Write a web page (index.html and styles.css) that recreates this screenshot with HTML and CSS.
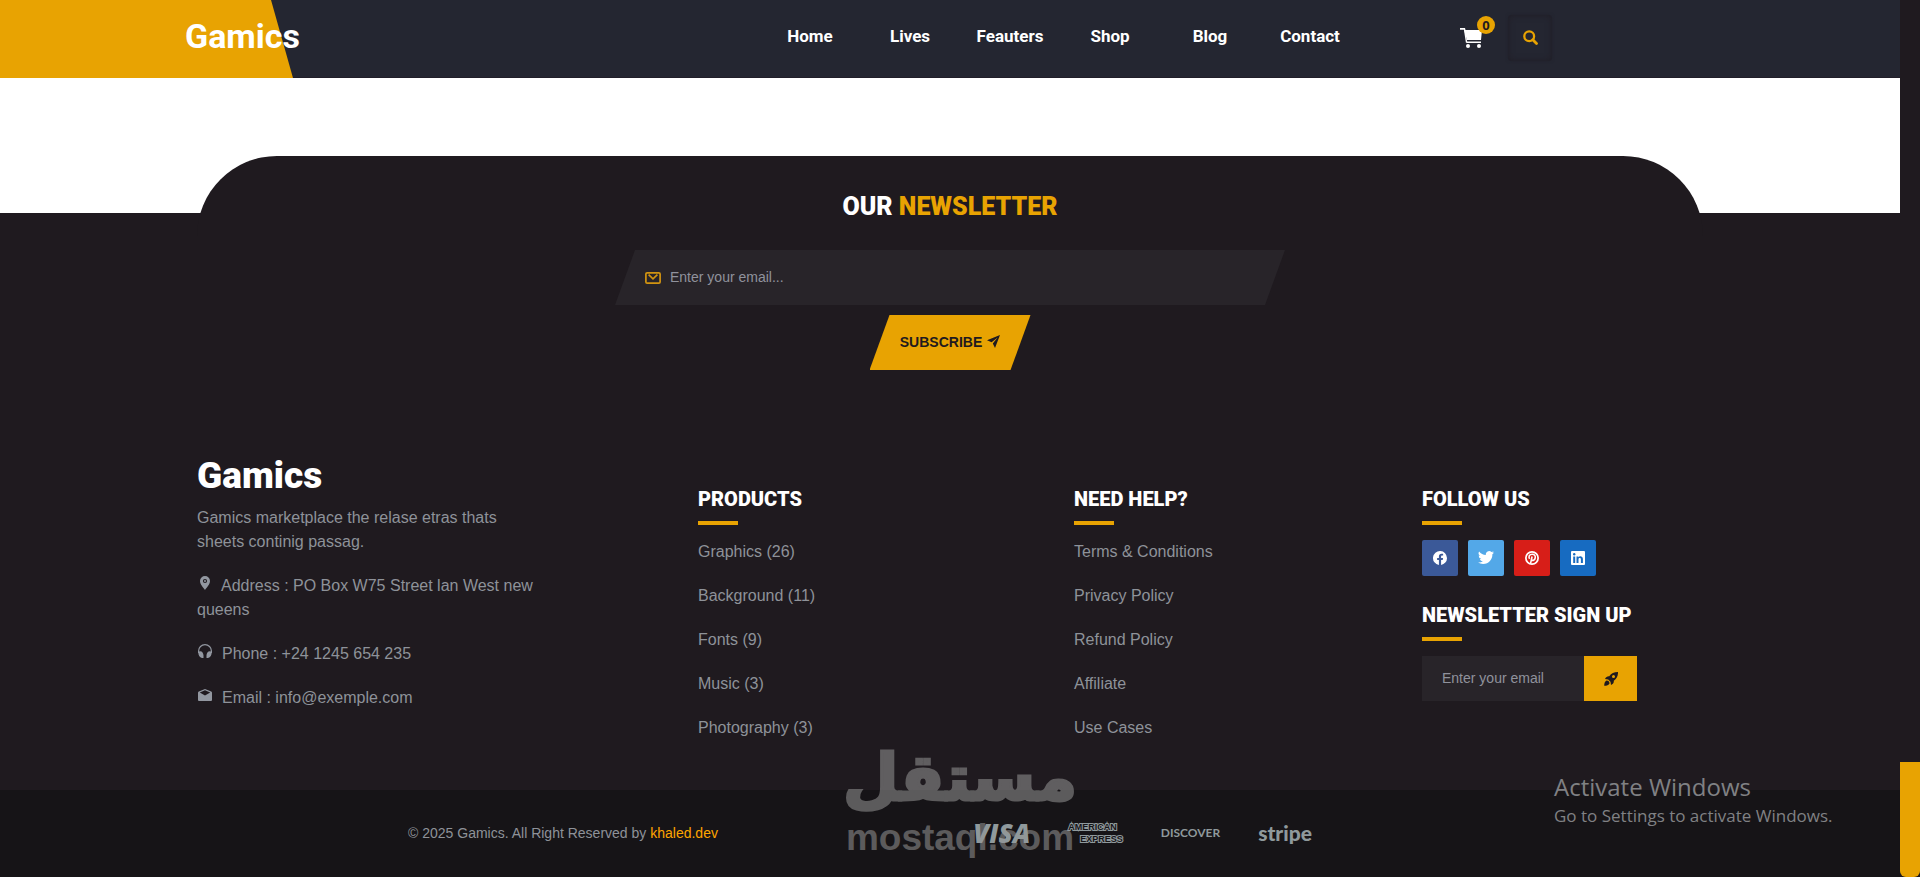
FILE: index.html
```html
<!DOCTYPE html>
<html lang="en">
<head>
<meta charset="utf-8">
<title>Gamics</title>
<link rel="stylesheet" href="styles.css">
</head>
<body>
<div class="page">
  <header class="header">
    <a class="logo" href="#">Gamics</a>
    <div class="header-right">
      <nav class="nav">
        <a href="#">Home</a>
        <a href="#">Lives</a>
        <a href="#">Feauters</a>
        <a href="#">Shop</a>
        <a href="#">Blog</a>
        <a href="#">Contact</a>
      </nav>
      <div class="tools">
        <a class="cart" href="#" aria-label="Cart">
          <svg width="22" height="20" viewBox="0 0 22 20" fill="#fff"><path d="M0 0h5l.5 2H22l-1 10H7L4 1.700H0zM6.500 13.500H21V15H6.500z"/><path d="M4.600 2l2 12.600" stroke="#fff" stroke-width="1.400"/><circle cx="8" cy="18" r="2"/><circle cx="19" cy="18" r="2"/></svg>
          <span class="badge">0</span>
        </a>
        <button class="search" type="button" aria-label="Search">
          <svg width="15" height="15" viewBox="0 0 15 15" fill="none" stroke="#e8a302"><circle cx="6.200" cy="6.200" r="4.900" stroke-width="2.300"/><path d="M9.800 9.800l3.700 3.700" stroke-width="2.800" stroke-linecap="round"/></svg>
        </button>
      </div>
    </div>
  </header>
  <main class="blank"></main>
  <footer class="footer">
    <section class="newsletter container">
      <h2 class="newsletter-title">OUR <span>NEWSLETTER</span></h2>
      <form class="subscribe-form">
        <label class="email-field">
          <svg width="16" height="12" viewBox="0 0 16 12" fill="none" stroke="#d29410" stroke-width="1.700"><rect x=".9" y=".9" width="14.200" height="10.200" rx="1.200"/><path d="M3.600 2.600L8 6.800l4.400-4.200"/></svg>
          <input type="email" placeholder="Enter your email..." aria-label="Enter your email">
        </label>
        <button class="subscribe" type="button">SUBSCRIBE
          <svg width="13" height="13" viewBox="0 0 13 13" fill="#1f1a1f"><path d="M13 0L0 5.200l4.600 2.100L10.600 2.600 5.800 8.400 8 13z"/></svg>
        </button>
      </form>
    </section>
    <div class="columns container">
      <section class="about">
        <h2 class="footer-logo">Gamics</h2>
        <p>Gamics marketplace the relase etras thats sheets continig passag.</p>
        <p><svg class="ico pin" width="10" height="14" viewBox="0 0 10 14" fill="#9297a0"><path fill-rule="evenodd" d="M5 0a5 5 0 0 1 5 5c0 3.400-3.300 6.500-5 9C3.300 11.500 0 8.400 0 5a5 5 0 0 1 5-5zm0 2.900a2.100 2.100 0 1 0 0 4.200 2.100 2.100 0 0 0 0-4.200z"/><circle cx="5" cy="5" r="1"/></svg>Address : PO Box W75 Street lan West new queens</p>
        <p><svg class="ico" width="14" height="14" viewBox="0 0 14 14" fill="#9297a0"><path d="M.6 9V7a6.400 6.400 0 0 1 12.800 0v2" fill="none" stroke="#9297a0" stroke-width="1.200"/><path d="M1.200 7.500C3.500 6.500 5.500 9 5.500 11.500V14H4C1.500 13.500.3 11 .3 8.500zM12.800 7.500C10.500 6.500 8.500 9 8.500 11.500V14H10c2.500-.5 3.700-3 3.700-5.500z"/></svg>Phone : +24 1245 654 235</p>
        <p><svg class="ico mail" width="14" height="12" viewBox="0 0 14 12" fill="#9297a0"><path fill-rule="evenodd" d="M7 0l6.200 2.500q.8.400.8 1.200V11q0 1-1 1H1q-1 0-1-1V3.700q0-.8.800-1.200zM7 1.200L1.800 3.400 7 6.400l5.200-3z"/></svg>Email : info@exemple.com</p>
      </section>
      <section class="col">
        <h3>PRODUCTS</h3>
        <ul>
          <li><a href="#">Graphics (26)</a></li>
          <li><a href="#">Background (11)</a></li>
          <li><a href="#">Fonts (9)</a></li>
          <li><a href="#">Music (3)</a></li>
          <li><a href="#">Photography (3)</a></li>
        </ul>
      </section>
      <section class="col">
        <h3>NEED HELP?</h3>
        <ul>
          <li><a href="#">Terms &amp; Conditions</a></li>
          <li><a href="#">Privacy Policy</a></li>
          <li><a href="#">Refund Policy</a></li>
          <li><a href="#">Affiliate</a></li>
          <li><a href="#">Use Cases</a></li>
        </ul>
      </section>
      <section class="col">
        <h3>FOLLOW US</h3>
        <div class="social">
          <a class="fb" href="#" aria-label="Facebook"><svg width="14" height="14" viewBox="0 0 16 16"><path fill="#fff" d="M16 8.050A8 8 0 1 0 6.750 16v-5.600H4.720V8.050h2.030V6.270c0-2 1.200-3.120 3.020-3.120.88 0 1.790.16 1.790.16v1.970h-1c-1 0-1.310.62-1.310 1.260v1.510h2.220l-.35 2.330H9.250V16A8 8 0 0 0 16 8.050z"/></svg></a>
          <a class="tw" href="#" aria-label="Twitter"><svg width="16" height="16" viewBox="0 0 16 16"><path fill="#fff" d="M5.030 14c6.040 0 9.340-5 9.340-9.330l-.01-.42A6.700 6.700 0 0 0 16 2.540a6.600 6.600 0 0 1-1.890.52A3.300 3.300 0 0 0 15.560 1.240a6.500 6.500 0 0 1-2.090.79 3.290 3.290 0 0 0-5.590 3A9.320 9.320 0 0 1 1.110 1.600a3.290 3.290 0 0 0 1.020 4.380 3.300 3.300 0 0 1-1.490-.41v.04a3.290 3.290 0 0 0 2.630 3.220 3.200 3.200 0 0 1-1.480.06 3.290 3.290 0 0 0 3.070 2.280A6.600 6.600 0 0 1 0 12.530 9.300 9.300 0 0 0 5.030 14"/></svg></a>
          <a class="pi" href="#" aria-label="Pinterest"><svg width="14" height="14" viewBox="0 0 16 16" fill="none" stroke="#fff"><circle cx="8" cy="8" r="7" stroke-width="2"/><path d="M6.300 14.500L8.100 6.300M5.200 9C3.700 6.500 5 3.700 8.200 3.700c2.600 0 3.900 1.800 3.500 4-.5 3-3 3.700-4.200 2.300" stroke-width="1.800"/></svg></a>
          <a class="li" href="#" aria-label="LinkedIn"><svg width="14" height="14" viewBox="0 0 14 14"><rect width="14" height="14" rx="1" fill="#fff"/><g fill="#176bc1"><circle cx="3.200" cy="3.300" r="1.200"/><path d="M2.200 5.400h2V12h-2zM5.500 5.400h1.900v.9c1-1.700 4.500-1.500 4.500 1.700v4H9.900V8.500c0-2-2.400-1.900-2.400 0V12h-2z"/></g></svg></a>
        </div>
        <h3>NEWSLETTER SIGN UP</h3>
        <form class="signup">
          <input type="email" placeholder="Enter your email" aria-label="Newsletter email">
          <button type="button" aria-label="Sign up"><svg width="14" height="14" viewBox="0 0 14 14" fill="#1f1a1f"><path fill-rule="evenodd" d="M14 0c.2 4-1.300 6.800-4.200 8.700.2 2-.8 3.300-2.800 4.300l-.5-3.200-2.300-2.300L1 7C2 5 3.300 4 5.300 4.200 7.200 1.300 10 0 14 0zM9.500 3a1.500 1.500 0 1 0 0 3 1.500 1.500 0 0 0 0-3z"/><path d="M2.600 8.500c1.700 0 3 1.300 2.900 3C4.800 13 2.800 13.800.2 13.800c0-2.700.9-4.700 2.400-5.300z"/></svg></button>
        </form>
      </section>
    </div>
    <div class="bottom">
      <div class="bottom-inner">
        <p>© 2025 Gamics. All Right Reserved by <a href="#">khaled.dev</a></p>
        <div class="payments">
          <span class="visa">VISA</span>
          <span class="amex"><span>AMERICAN</span><span class="express">EXPRESS</span></span>
          <span class="discover">DISCOVER</span>
          <span class="stripe">stripe</span>
        </div>
      </div>
    </div>
  </footer>
</div>
<div class="rail"><div class="thumb"></div></div>
<div class="watermark"><span class="wm-ar" lang="ar" dir="rtl">مستقل</span><span class="wm-en">mostaql.com</span></div>
<div class="activate"><div class="activate-title">Activate Windows</div><div class="activate-text">Go to Settings to activate Windows.</div></div>
</body>
</html>
```

FILE: styles.css
```css
* { box-sizing: border-box; }
body {
  margin: 0;
  display: flex;
  min-height: 100vh;
  background: #1f1a1f;
  color: #8e9299;
  font: 16px/24px "Liberation Sans", Arial, sans-serif;
}
a { color: inherit; text-decoration: none; }
h2, h3, p, ul { margin: 0; padding: 0; }
ul { list-style: none; }
svg { display: block; flex: none; }
input, button { border: 0; padding: 0; font-family: inherit; outline: 0; }
button { cursor: pointer; }
input::placeholder { color: #90929c; opacity: 1; }

.page { flex: 1; min-width: 0; display: flex; flex-direction: column; background: #fff; }
.rail { width: 20px; background: #1f1a1f; display: flex; flex-direction: column; justify-content: flex-end; }
.thumb { height: 115px; background: #e8a302; border-radius: 0 0 6px 6px; }
.container { width: 100%; max-width: 1506px; margin-left: auto; margin-right: auto; }

.header {
  position: relative;
  display: flex;
  align-items: center;
  height: 78px;
  padding: 0 348px 2px 185px;
  background: #242631;
  border-bottom: 1px solid #211e29;
}
.header::before {
  content: "";
  position: absolute;
  inset: 0 auto -1px 0;
  width: 293px;
  background: #e8a302;
  clip-path: polygon(0 0, 271px 0, 100% 100%, 0 100%);
}
.logo { position: relative; padding-bottom: 4px; font: 700 34px/40px Roboto, sans-serif; color: #fff; }
.header-right { margin-left: auto; display: flex; align-items: center; gap: 100px; }
.nav { display: grid; grid-template-columns: repeat(6, 100px); padding-bottom: 4px; text-align: center; font: 700 17px/24px Roboto, sans-serif; color: #fff; }
.tools { display: flex; align-items: center; gap: 26px; }
.cart { position: relative; }
.badge {
  position: absolute;
  top: -12px;
  left: 17px;
  width: 18px;
  height: 18px;
  border-radius: 50%;
  background: #e8a302;
  color: #1f1a1f;
  font: 700 13px/18px "Open Sans", sans-serif;
  text-align: center;
}
.search { display: grid; place-items: center; width: 44px; height: 46px; border-radius: 4px; background: transparent; box-shadow: 0 0 3px #21212b, inset 0 0 6px #201d25; }

.blank { min-height: 135px; }
.footer { flex: 1; display: flex; flex-direction: column; background: #1f1a1f; }
.newsletter { margin-top: -57px; padding-top: 36px; border-radius: 80px 80px 0 0; background: #1f1a1f; }
.newsletter-title { font: 900 25px/30px Roboto, sans-serif; color: #fff; text-align: center; }
.newsletter-title span { color: #e8a302; }
.subscribe-form { display: flex; flex-direction: column; align-items: center; gap: 10px; margin-top: 28px; }
.email-field {
  display: flex;
  align-items: center;
  gap: 9px;
  width: 670px;
  height: 55px;
  padding: 0 40px 0 30px;
  background: #282429;
  clip-path: polygon(20px 0, 100% 0, calc(100% - 20px) 100%, 0 100%);
}
.email-field input { flex: 1; padding-bottom: 2px; background: transparent; font-size: 14px; color: #fff; }
.subscribe {
  display: flex;
  align-items: center;
  justify-content: center;
  gap: 5px;
  width: 161px;
  height: 55px;
  padding-bottom: 2px;
  background: #e8a302;
  color: #1f1a1f;
  font-size: 14px;
  font-weight: 700;
  clip-path: polygon(20px 0, 100% 0, calc(100% - 20px) 100%, 0 100%);
}

.columns { display: grid; grid-template-columns: 501fr 376fr 348fr 281fr; padding: 84px 0 50px; }
.about { max-width: 342px; }
.about p { margin-bottom: 20px; }
.footer-logo { margin-bottom: 8px; font: 900 37px/44px Roboto, sans-serif; color: #fff; }
.ico { display: inline-block; vertical-align: 1px; margin: 0 10px 0 1px; }
.pin { margin-left: 3px; margin-right: 11px; }
.mail { vertical-align: 2px; }
.col { padding-top: 33px; }
.col h3 { font: 900 20px/24px Roboto, sans-serif; color: #fff; }
.col h3::after { content: ""; display: block; width: 40px; height: 4px; margin: 10px 0 15px; background: #e8a302; }
.col ul { display: grid; gap: 20px; }
.social { display: flex; gap: 10px; margin-bottom: 27px; }
.social a { display: grid; place-items: center; width: 36px; height: 36px; border-radius: 2px; }
.fb { background: #3b5998; }
.tw { background: #53a8e8; }
.pi { background: #d71e18; }
.li { background: #176bc1; }
.signup { display: flex; width: 215px; height: 45px; background: #282429; }
.signup input { flex: 1; min-width: 0; padding: 0 0 2px 20px; background: transparent; font-size: 14px; color: #fff; }
.signup button { display: grid; place-items: center; width: 53px; background: #e8a302; }

.bottom { flex: 1; display: flex; align-items: center; justify-content: center; min-height: 87px; padding-bottom: 2px; background: #161417; font-size: 14px; }
.bottom-inner { display: flex; align-items: center; justify-content: space-between; width: 100%; max-width: 1084px; padding-right: 180px; }
.bottom a { color: #fea500; }
.payments { display: flex; align-items: center; gap: 38px; color: #8f999c; white-space: nowrap; }
.visa { font: italic 800 26px/28px "Open Sans", sans-serif; }
.amex { display: grid; font: 700 9px/12px "Liberation Sans", sans-serif; color: #161417; -webkit-text-stroke: 2px #8f999c; paint-order: stroke fill; }
.express { padding-left: 12px; }
.discover { font: 700 12px/16px Lato, sans-serif; }
.stripe { font: 900 21px/24px Lato, sans-serif; }

.watermark {
  position: absolute;
  top: 738px;
  left: 846px;
  width: 228px;
  display: flex;
  flex-direction: column;
  align-items: center;
  color: #969696;
  opacity: .55;
  white-space: nowrap;
  pointer-events: none;
}
.wm-ar { font: 700 64px/80px "DejaVu Sans", sans-serif; -webkit-text-stroke: 3px #969696; stroke-linejoin: round; }
.wm-en { font: 700 37px/40px "Liberation Sans", sans-serif; }
.activate { position: absolute; right: 83px; bottom: 48px; width: 283px; color: #808184; white-space: nowrap; pointer-events: none; }
.activate-title { font: 400 24px/32px "Open Sans", sans-serif; }
.activate-text { font: 400 17px/26px "Open Sans", sans-serif; }
```
